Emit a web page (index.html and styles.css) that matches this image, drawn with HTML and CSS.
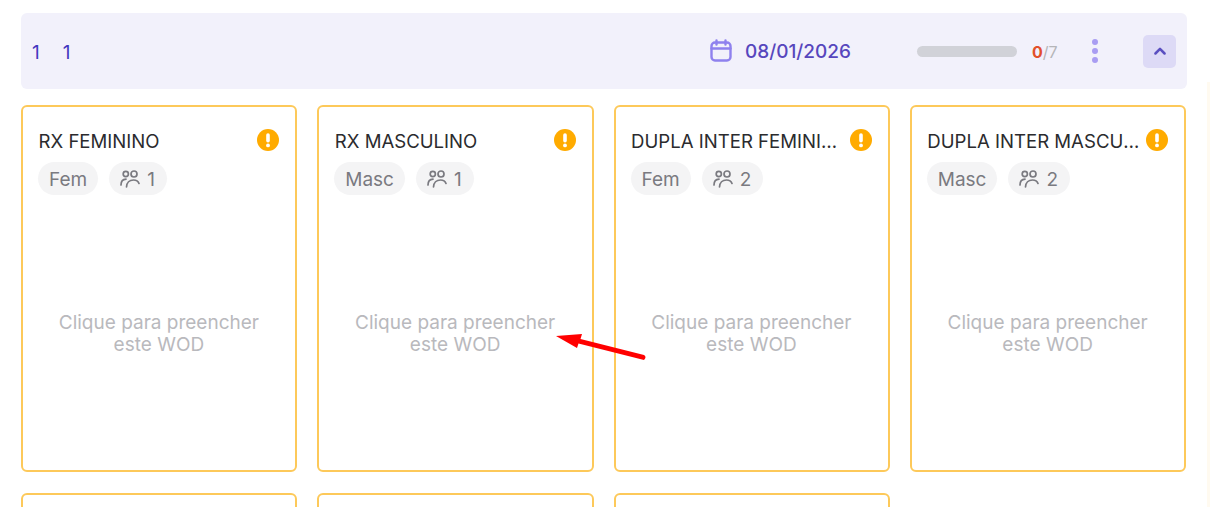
FILE: index.html
```html
<!DOCTYPE html>
<html lang="pt">
<head>
<meta charset="utf-8">
<title>WODs</title>
<link rel="stylesheet" href="styles.css">
</head>
<body>
<main class="page">
  <header class="bar">
    <div class="ids"><span>1</span><span>1</span></div>
    <div class="date">
      <svg class="cal" viewBox="0 0 22 24" fill="none" stroke="currentColor" stroke-width="2.400" stroke-linecap="round" stroke-linejoin="round"><rect x="1.500" y="3.500" width="19" height="18" rx="3.500"/><path d="M1.500 9.500h19M6.500 1.500v4M15.500 1.500v4"/></svg>
      <span class="date-text">08/01/2026</span>
    </div>
    <div class="track"></div>
    <div class="count"><b>0</b><span>/7</span></div>
    <div class="dots"><i></i><i></i><i></i></div>
    <button class="toggle" type="button" aria-label="Recolher">
      <svg viewBox="0 0 24 24" fill="none" stroke="currentColor" stroke-width="3" stroke-linecap="round" stroke-linejoin="round"><path d="M6.500 15l5.500-5.500 5.500 5.500"/></svg>
    </button>
  </header>

  <section class="grid">
    <article class="card">
      <div class="head"><h3>RX FEMININO</h3><svg class="warn" viewBox="0 0 22 22"><circle cx="11" cy="11" r="11"/><rect x="9.200" y="4.200" width="3.600" height="9.300" rx="1.800"/><circle cx="11" cy="16.400" r="1.900"/></svg></div>
      <div class="tags"><span class="pill">Fem</span><span class="pill pill-people"><svg class="ppl" viewBox="0 0 20 20" fill="none" stroke="currentColor" stroke-width="1.700" stroke-linecap="round" stroke-linejoin="round"><circle cx="5.800" cy="5" r="2.600"/><circle cx="14" cy="5" r="3"/><path d="M1 16c0-3.400 1.800-5.600 5-5.800M6.500 18c.2-4.300 3-7 7-7 2.800 0 4.800 1.400 5.500 3.500"/></svg>1</span></div>
      <p class="empty">Clique para preencher este WOD</p>
    </article>
    <article class="card">
      <div class="head"><h3>RX MASCULINO</h3><svg class="warn" viewBox="0 0 22 22"><circle cx="11" cy="11" r="11"/><rect x="9.200" y="4.200" width="3.600" height="9.300" rx="1.800"/><circle cx="11" cy="16.400" r="1.900"/></svg></div>
      <div class="tags"><span class="pill">Masc</span><span class="pill pill-people"><svg class="ppl" viewBox="0 0 20 20" fill="none" stroke="currentColor" stroke-width="1.700" stroke-linecap="round" stroke-linejoin="round"><circle cx="5.800" cy="5" r="2.600"/><circle cx="14" cy="5" r="3"/><path d="M1 16c0-3.400 1.800-5.600 5-5.800M6.500 18c.2-4.300 3-7 7-7 2.800 0 4.800 1.400 5.500 3.500"/></svg>1</span></div>
      <p class="empty">Clique para preencher este WOD</p>
    </article>
    <article class="card">
      <div class="head"><h3>DUPLA INTER FEMININO</h3><svg class="warn" viewBox="0 0 22 22"><circle cx="11" cy="11" r="11"/><rect x="9.200" y="4.200" width="3.600" height="9.300" rx="1.800"/><circle cx="11" cy="16.400" r="1.900"/></svg></div>
      <div class="tags"><span class="pill">Fem</span><span class="pill pill-people"><svg class="ppl" viewBox="0 0 20 20" fill="none" stroke="currentColor" stroke-width="1.700" stroke-linecap="round" stroke-linejoin="round"><circle cx="5.800" cy="5" r="2.600"/><circle cx="14" cy="5" r="3"/><path d="M1 16c0-3.400 1.800-5.600 5-5.800M6.500 18c.2-4.300 3-7 7-7 2.800 0 4.800 1.400 5.500 3.500"/></svg>2</span></div>
      <p class="empty">Clique para preencher este WOD</p>
    </article>
    <article class="card">
      <div class="head"><h3>DUPLA INTER MASCULINO</h3><svg class="warn" viewBox="0 0 22 22"><circle cx="11" cy="11" r="11"/><rect x="9.200" y="4.200" width="3.600" height="9.300" rx="1.800"/><circle cx="11" cy="16.400" r="1.900"/></svg></div>
      <div class="tags"><span class="pill">Masc</span><span class="pill pill-people"><svg class="ppl" viewBox="0 0 20 20" fill="none" stroke="currentColor" stroke-width="1.700" stroke-linecap="round" stroke-linejoin="round"><circle cx="5.800" cy="5" r="2.600"/><circle cx="14" cy="5" r="3"/><path d="M1 16c0-3.400 1.800-5.600 5-5.800M6.500 18c.2-4.300 3-7 7-7 2.800 0 4.800 1.400 5.500 3.500"/></svg>2</span></div>
      <p class="empty">Clique para preencher este WOD</p>
    </article>
    <article class="card"></article>
    <article class="card"></article>
    <article class="card"></article>
  </section>

  <svg class="arrow" viewBox="0 0 100 32" fill="#ff0000"><path d="M4 6 L30 4 L28.500 9 L92 25 Q95 27 92 30 L26.500 13.500 L25 18Z"/></svg>
  <div class="edge"></div>
</main>
</body>
</html>
```

FILE: styles.css
```css
* { box-sizing: border-box; }
html, body { margin: 0; height: 507px; overflow: hidden; background: #fff; }
body { font-family: Inter, "Liberation Sans", sans-serif; }
.page { padding: 13px 23px 0 21px; height: 507px; overflow: hidden; }

.bar {
  display: flex; align-items: center; height: 76px; padding: 0 11px;
  background: #f2f1fb; border-radius: 6px;
}
.ids { display: flex; gap: 23px; padding-top: 3px; color: #4438c0; font-size: 19px; line-height: 24px; margin-right: auto; }
.date { display: flex; align-items: center; gap: 13px; color: #5746bd; font-size: 19px; font-weight: 500; line-height: 24px; }
.date-text { padding-top: 2px; }
.cal { width: 22px; height: 24px; color: #8f81ee; }
.track { width: 100px; height: 11px; border-radius: 6px; background: #d1d2d8; margin: 0 15px 0 66px; }
.count { width: 37px; padding-top: 2px; font-size: 16px; line-height: 20px; color: #b5b5b8; }
.count b { color: #e2502a; font-weight: 700; }
.dots { display: flex; flex-direction: column; gap: 3px; margin: 0 45px 0 23px; }
.dots i { display: block; width: 6px; height: 6px; border-radius: 50%; background: #a99df2; }
.toggle {
  display: flex; align-items: center; justify-content: center; width: 33px; height: 33px; padding: 0;
  border: 0; border-radius: 5px; background: #dddaf6; color: #5a4fc0;
}
.toggle svg { width: 20px; height: 20px; }

.grid { display: grid; grid-template-columns: repeat(4, minmax(0, 1fr)); gap: 21.500px 20px; margin: 16px 1px 0 0; }
.card {
  display: flex; flex-direction: column; height: 366.500px; padding: 22px 16px 0 15.500px;
  border: 2px solid #fdc95a; border-radius: 6px; background: #fff;
}
.head { display: flex; align-items: center; gap: 5px; height: 24px; }
.head h3 { flex: 1; min-width: 0; margin: 0; font-size: 18.600px; font-weight: 420; line-height: 24px; color: #2b2b2e; white-space: nowrap; overflow: hidden; text-overflow: ellipsis; }
.warn { flex: none; width: 22px; height: 22px; fill: #fff; margin-top: -2px; }
.warn circle:first-child { fill: #ffab00; }
.tags { display: flex; gap: 11px; margin: 9px 0 0 -0.500px; }
.pill { display: flex; align-items: center; gap: 7px; height: 33px; padding: 2px 11px 0; border-radius: 17px; background: #f4f4f5; color: #7a7a80; font-size: 19px; }
.pill-people { padding-right: 12px; }
.ppl { width: 20px; height: 20px; margin-top: -2px; }
.empty { margin: 117px 16px 0; text-align: center; font-size: 19px; line-height: 22px; color: #b9b9bd; }

.arrow { position: absolute; left: 552px; top: 330px; width: 100px; height: 32px; }
.edge { position: absolute; right: 0; top: 82px; bottom: 0; width: 3px; background: #fffaf0; }
```
